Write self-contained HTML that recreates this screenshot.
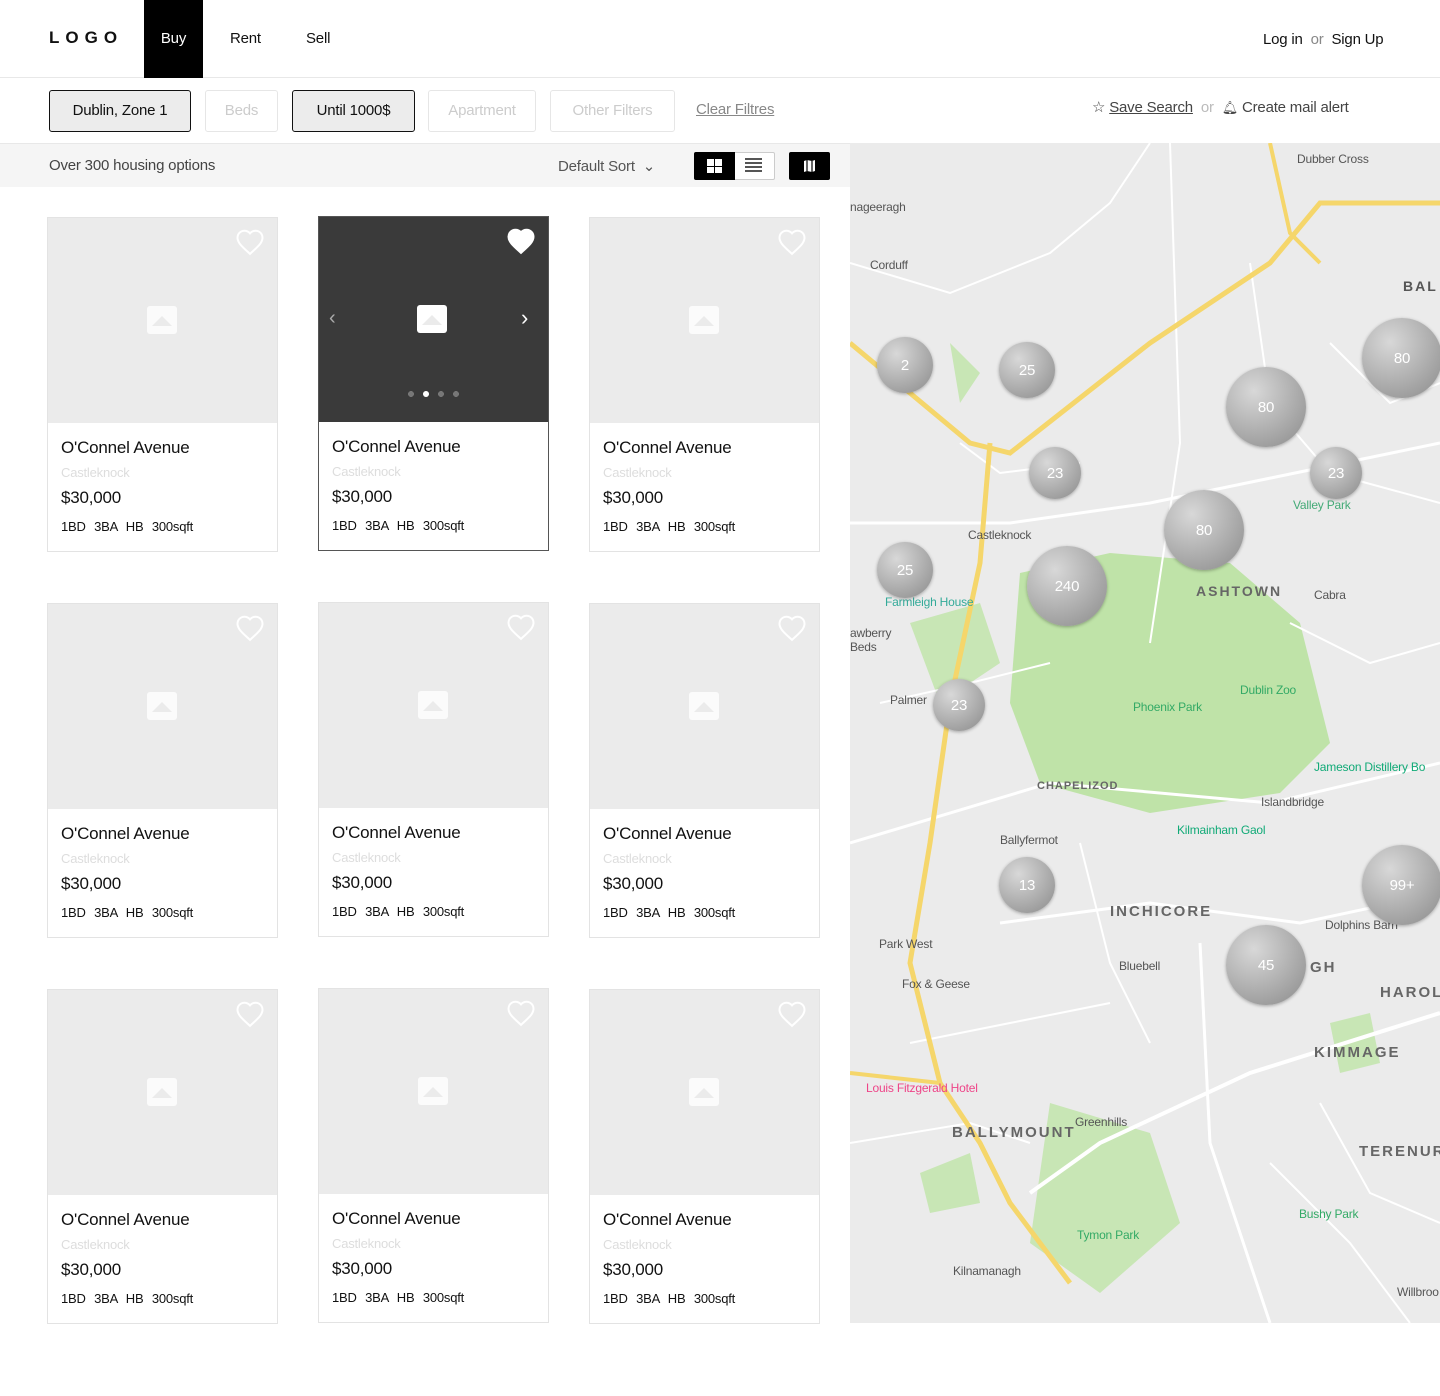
<!DOCTYPE html>
<html><head><meta charset="utf-8"><style>
*{box-sizing:border-box;margin:0;padding:0}
body{width:1440px;height:1396px;background:#fff;font-family:"Liberation Sans",sans-serif;position:relative;overflow:hidden;color:#111;letter-spacing:-0.2px}
.abs{position:absolute}
.nav a{position:absolute;top:0;height:78px;line-height:78px;font-size:15px;color:#111}
.fb{position:absolute;top:90px;height:42px;border:1px solid #e6e6e6;border-radius:3px;font-size:15px;line-height:40px;text-align:center;color:#ccc}
.fb.on{background:#ececec;border:1px solid #111;color:#111}
.card{position:absolute;width:231px;height:335px;border:1px solid #e3e3e3;background:#fff}
.card .img{height:205px;background:#ebebeb;position:relative}
.card .t{position:absolute;left:13px;top:220px;font-size:17px}
.card .s{position:absolute;left:13px;top:247px;font-size:13px;color:#ddd}
.card .p{position:absolute;left:13px;top:270px;font-size:17px}
.card .f{position:absolute;left:13px;top:301px;font-size:13px;word-spacing:5px}
.ph{position:absolute;left:100px;top:88px;width:30px;height:28px;background:#fff;border-radius:3px;opacity:.8}
.ph:after{content:"";position:absolute;left:5px;top:10px;border-left:10px solid transparent;border-right:10px solid transparent;border-bottom:10px solid #ebebeb}
.hrt{position:absolute;right:12px;top:10px}
.cl{position:absolute;border-radius:50%;background:radial-gradient(circle at 35% 30%,#d8d8d8,#8a8a8a);color:#fff;font-size:15px;display:flex;align-items:center;justify-content:center;box-shadow:0 1px 3px rgba(0,0,0,.3)}
.ml{position:absolute;font-size:12px;color:#555}
</style></head><body>
<div class="abs" style="left:0;top:77px;width:1440px;height:1px;background:#e8e8e8"></div>
<div class="abs" style="left:49px;top:28px;font-size:17px;font-weight:bold;letter-spacing:6px">LOGO</div>
<div class="nav"><a style="left:144px;width:59px;background:#000;color:#fff;text-align:center">Buy</a><a style="left:230px">Rent</a><a style="left:306px">Sell</a></div>
<div class="abs" style="left:1263px;top:31px;font-size:15px">Log in <span style="color:#888">&nbsp;or&nbsp;</span> Sign Up</div>
<div class="fb on" style="left:49px;width:142px">Dublin, Zone 1</div>
<div class="fb" style="left:205px;width:73px">Beds</div>
<div class="fb on" style="left:292px;width:123px">Until 1000$</div>
<div class="fb" style="left:428px;width:108px">Apartment</div>
<div class="fb" style="left:550px;width:125px">Other Filters</div>
<div class="abs" style="left:696px;top:101px;font-size:15px;color:#888;text-decoration:underline">Clear Filtres</div>
<div class="abs" style="left:1092px;top:98px;font-size:15px;color:#444">☆ <u>Save Search</u> <span style="color:#bbb">&nbsp;or&nbsp;</span> <span style="font-size:13px">🔔︎</span> Create mail alert</div>
<div class="abs" style="left:0;top:143px;width:850px;height:44px;background:#f5f5f5;border-top:1px solid #e8e8e8"></div>
<div class="abs" style="left:49px;top:157px;font-size:15px;color:#444">Over 300 housing options</div>
<div class="abs" style="left:558px;top:157px;font-size:15px;color:#555">Default Sort &nbsp;⌄</div>
<div class="abs" style="left:694px;top:152px;width:81px;height:28px;border:1px solid #ccc;border-radius:2px;background:#fff"></div>
<div class="abs" style="left:694px;top:152px;width:41px;height:28px;background:#000;border-radius:2px 0 0 2px"><div class="abs" style="left:13px;top:7px;width:15px;height:14px;background:linear-gradient(90deg,transparent 7px,#000 7px,#000 8px,transparent 8px),linear-gradient(0deg,#fff 6px,#000 6px,#000 7px,#fff 7px)"></div></div>
<div class="abs" style="left:745px;top:158px;width:17px;height:14px;background:repeating-linear-gradient(#555 0 2px,transparent 2px 4px)"></div>
<div class="abs" style="left:789px;top:152px;width:41px;height:28px;background:#000;border-radius:2px"><svg class="abs" style="left:14px;top:7px" width="13" height="14" viewBox="0 0 13 14"><path d="M1 2l3-1 5 1 3-1v11l-3 1-5-1-3 1z" fill="#fff"/><path d="M4 1v11M9 2v11" stroke="#000" stroke-width="1.2"/></svg></div>

<div id="cards"></div>
<script>
const xs=[47,318,589],ys=[216,602,988];let h='';
const heart=(f)=>`<svg class="hrt" width="30" height="28" viewBox="0 0 24 22"><path d="M12 20.5l-1.4-1.3C5.4 14.5 2 11.4 2 7.6 2 4.5 4.4 2 7.5 2c1.7 0 3.4.8 4.5 2.1C13.1 2.8 14.8 2 16.5 2 19.6 2 22 4.5 22 7.6c0 3.8-3.4 6.9-8.6 11.6z" fill="${f?'#fff':'none'}" stroke="#fff" stroke-width="1.6"/></svg>`;
ys.forEach((y,r)=>xs.forEach((x,c)=>{const a=r==0&&c==1;const dy=(c==1)?0:1;
h+=`<div class="card" style="left:${x}px;top:${y+dy}px;${a?'border-color:#555':''}"><div class="img" style="${a?'background:#3a3a3a':''}">${heart(a)}<div class="ph" style="left:${a?98:99}px;${a?'opacity:1':''}"></div>${a?'<div class="abs" style="left:10px;top:90px;color:#aaa;font-size:20px">‹</div><div class="abs" style="left:202px;top:88px;color:#fff;font-size:22px">›</div><div class="abs" style="left:89px;top:174px;width:60px;height:6px;background:radial-gradient(circle 3px at 3px 3px,#777 3px,transparent 3px) 0 0/15px 6px repeat-x"></div><div class="abs" style="left:104px;top:174px;width:6px;height:6px;border-radius:50%;background:#fff"></div>':''}</div><div class="t">O'Connel Avenue</div><div class="s">Castleknock</div><div class="p">$30,000</div><div class="f">1BD 3BA HB 300sqft</div></div>`;}));
document.getElementById('cards').innerHTML=h;
</script>

<div class="abs" style="left:850px;top:143px;width:590px;height:1180px;background:#ebebeb;overflow:hidden">
<svg width="590" height="1180" style="position:absolute;left:0;top:0">
<path d="M170 430 L260 410 L380 420 L450 480 L480 600 L430 650 L300 670 L190 640 L160 560 Z" fill="#bfe3a8"/>
<path d="M60 480 L130 460 L150 520 L90 560 Z" fill="#c8e6b5"/>
<path d="M200 960 L300 990 L330 1080 L250 1150 L180 1100 Z" fill="#c8e6b5"/>
<path d="M100 200 L130 230 L110 260 Z M480 880 L520 870 L530 920 L490 930 Z M70 1030 L120 1010 L130 1060 L80 1070 Z" fill="#c8e6b5"/>
<g stroke="#fff" fill="none">
<path d="M180 1050 L250 1000 L400 930 L590 870" stroke-width="4"/>
<path d="M0 700 L200 640 L420 660 L590 620" stroke-width="3"/>
<path d="M0 380 L160 380 L300 360 L590 300" stroke-width="3"/>
<path d="M150 780 L300 760 L450 780 L590 750" stroke-width="3"/>
<path d="M320 0 L330 300 L300 500" stroke-width="2"/>
<path d="M350 800 L360 1000 L420 1180" stroke-width="3"/>
<path d="M0 120 L100 150 L200 110 L260 60 L300 0" stroke-width="2"/>
<path d="M480 200 L540 260 L590 240" stroke-width="2"/>
<path d="M30 560 L120 540 L200 520 M60 900 L160 880 L260 860" stroke-width="2"/>
<path d="M400 120 L420 260 L480 330 L590 360" stroke-width="2"/>
<path d="M230 700 L260 820 L300 900 M470 960 L520 1050 L590 1080" stroke-width="2"/>
<path d="M0 1000 L120 980 L180 1000 M420 1020 L500 1100 L560 1180" stroke-width="2"/>
<path d="M440 480 L520 520 L590 500 M110 300 L150 330 L230 320" stroke-width="2"/>
</g>
<g stroke="#f5d66b" fill="none">
<path d="M0 200 L120 300 L160 310 L300 200 L420 120 L470 60 L590 60" stroke-width="5"/>
<path d="M420 0 L440 90 L470 120" stroke-width="4"/>
<path d="M140 300 L130 420 L100 560 L80 700 L60 820 L90 940 L130 1000 L160 1060 L220 1140" stroke-width="5"/>
<path d="M0 930 L90 940" stroke-width="4"/>
</g>
</svg>
<div class="ml" style="left:447px;top:9px">Dubber Cross</div>
<div class="ml" style="left:0;top:57px">nageeragh</div>
<div class="ml" style="left:20px;top:115px">Corduff</div>
<div class="ml" style="left:553px;top:135px;font-weight:bold;letter-spacing:2px;font-size:14px">BAL</div>
<div class="ml" style="left:443px;top:355px;color:#4a7">Valley Park</div>
<div class="ml" style="left:118px;top:385px">Castleknock</div>
<div class="ml" style="left:35px;top:452px;color:#3a9">Farmleigh House</div>
<div class="ml" style="left:346px;top:440px;font-weight:bold;letter-spacing:2px;font-size:14px;color:#666">ASHTOWN</div>
<div class="ml" style="left:464px;top:445px">Cabra</div>
<div class="ml" style="left:0;top:483px">awberry<br>Beds</div>
<div class="ml" style="left:40px;top:550px">Palmer</div>
<div class="ml" style="left:283px;top:557px;color:#3a6">Phoenix Park</div>
<div class="ml" style="left:390px;top:540px;color:#3a6">Dublin Zoo</div>
<div class="ml" style="left:464px;top:617px;color:#1a7">Jameson Distillery Bo</div>
<div class="ml" style="left:187px;top:637px;font-weight:bold;letter-spacing:1px;font-size:11px;color:#666">CHAPELIZOD</div>
<div class="ml" style="left:411px;top:652px">Islandbridge</div>
<div class="ml" style="left:327px;top:680px;color:#1a7">Kilmainham Gaol</div>
<div class="ml" style="left:150px;top:690px">Ballyfermot</div>
<div class="ml" style="left:260px;top:760px;font-weight:bold;letter-spacing:2px;font-size:15px;color:#666">INCHICORE</div>
<div class="ml" style="left:475px;top:775px">Dolphins Barn</div>
<div class="ml" style="left:29px;top:794px">Park West</div>
<div class="ml" style="left:269px;top:816px">Bluebell</div>
<div class="ml" style="left:460px;top:816px;font-weight:bold;letter-spacing:2px;font-size:15px;color:#666">GH</div>
<div class="ml" style="left:52px;top:834px">Fox &amp; Geese</div>
<div class="ml" style="left:530px;top:841px;font-weight:bold;letter-spacing:2px;font-size:15px;color:#666">HAROL</div>
<div class="ml" style="left:464px;top:901px;font-weight:bold;letter-spacing:2px;font-size:15px;color:#666">KIMMAGE</div>
<div class="ml" style="left:16px;top:938px;color:#e48">Louis Fitzgerald Hotel</div>
<div class="ml" style="left:102px;top:981px;font-weight:bold;letter-spacing:2px;font-size:15px;color:#666">BALLYMOUNT</div>
<div class="ml" style="left:225px;top:972px">Greenhills</div>
<div class="ml" style="left:509px;top:1000px;font-weight:bold;letter-spacing:2px;font-size:15px;color:#666">TERENUR</div>
<div class="ml" style="left:449px;top:1064px;color:#3a6">Bushy Park</div>
<div class="ml" style="left:227px;top:1085px;color:#3a6">Tymon Park</div>
<div class="ml" style="left:103px;top:1121px">Kilnamanagh</div>
<div class="ml" style="left:547px;top:1142px">Willbroo</div>
</div>
<div id="cls"></div>
<script>
const c=[[905,365,28,'2'],[1027,370,28,'25'],[1402,358,40,'80'],[1266,407,40,'80'],[1055,473,26,'23'],[1336,473,26,'23'],[1204,530,40,'80'],[905,570,28,'25'],[1067,586,40,'240'],[959,705,26,'23'],[1027,885,28,'13'],[1402,885,40,'99+'],[1266,965,40,'45']];
document.getElementById('cls').innerHTML=c.map(([x,y,r,t])=>`<div class="cl" style="left:${x-r}px;top:${y-r}px;width:${2*r}px;height:${2*r}px">${t}</div>`).join('');
</script>
</body></html>
